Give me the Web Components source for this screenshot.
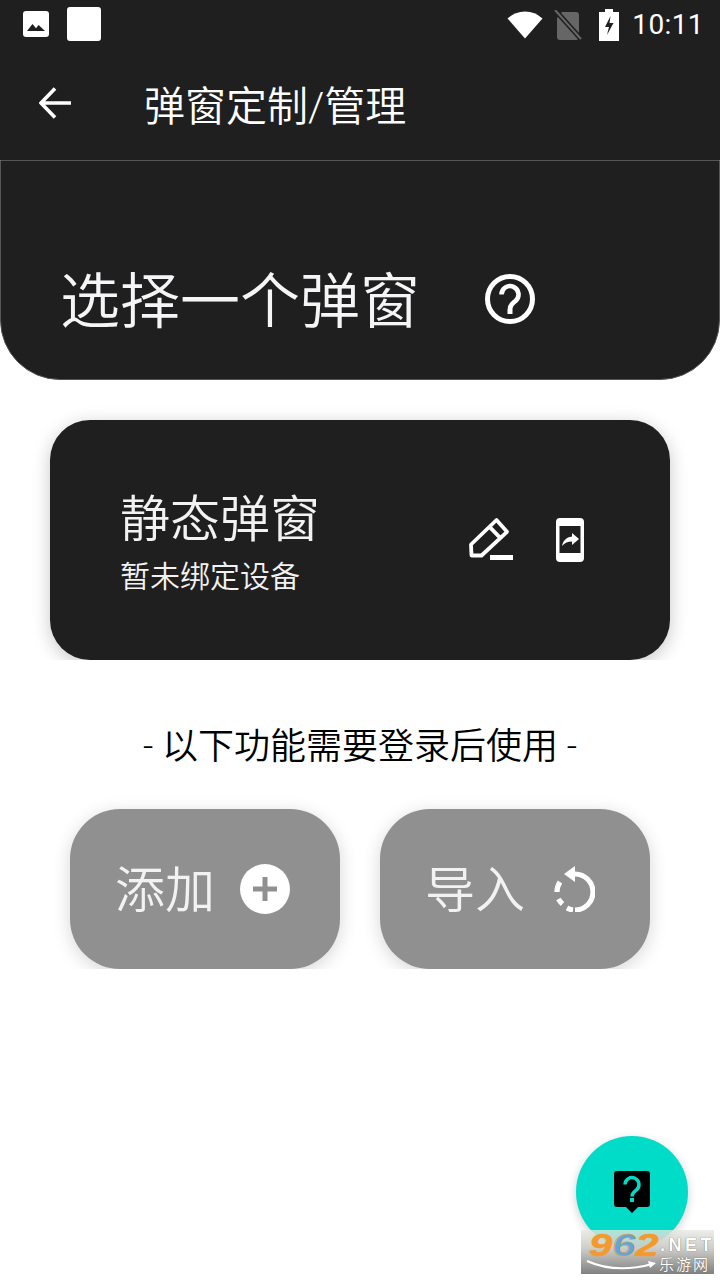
<!DOCTYPE html>
<html lang="zh">
<head>
<meta charset="utf-8">
<title>弹窗定制/管理</title>
<style>
  html, body { margin: 0; padding: 0; background: #fff; }
  body { width: 720px; height: 1280px; overflow: hidden; font-family: Roboto, "Noto Sans CJK SC", sans-serif; font-weight: 350; }
</style>
</head>
<body>
<app-screen>
  <status-bar slot="top" time="10:11"></status-bar>
  <tool-bar slot="top">弹窗定制/管理</tool-bar>
  <select-header slot="top">选择一个弹窗</select-header>
  <popup-card name="静态弹窗" sub="暂未绑定设备"></popup-card>
  <login-note>- 以下功能需要登录后使用 -</login-note>
  <action-row></action-row>
</app-screen>
<help-fab></help-fab>
<site-mark></site-mark>

<script>
class AppScreen extends HTMLElement {
  constructor() {
    super();
    this.attachShadow({ mode: 'open' });
    this.shadowRoot.innerHTML = `
      <style>
        :host { display: flex; flex-direction: column; width: 720px; height: 1280px; }
        main { display: flex; flex-direction: column; align-items: center; padding-top: 40px; }
      </style>
      <slot name="top"></slot>
      <main><slot></slot></main>
    `;
  }
}

class StatusBar extends HTMLElement {
  constructor() {
    super();
    this.attachShadow({ mode: 'open' });
    this.shadowRoot.innerHTML = `
      <style>
        :host { display: flex; align-items: center; height: 50px; background: #1f1f1f; color: #fff; }
        svg { display: block; flex: none; }
        .left { display: flex; align-items: center; gap: 18px; padding: 0 0 2px 23px; }
        .blank { width: 34px; height: 34px; background: #fff; border-radius: 3px; }
        .right { display: flex; align-items: center; margin-left: auto; padding-right: 16px; }
        .time { font-size: 28px; font-weight: 400; line-height: 50px; margin-left: 13px; letter-spacing: 0.4px; }
      </style>
      <div class="left">
        <svg width="26" height="26" viewBox="0 0 26 26"><rect width="26" height="26" rx="3" fill="#fff"/><path d="M4 20l5.500-7 3.500 4.200 2.600-3.200L22 20z" fill="#1f1f1f"/></svg>
        <div class="blank"></div>
      </div>
      <div class="right">
        <svg width="36" height="28" viewBox="0 0 36 28"><path d="M18 27.500L.5 7.500Q8 .5 18 .5t17.500 7z" fill="#fff"/></svg>
        <svg style="margin-left:11px" width="28" height="30" viewBox="0 0 28 30"><path d="M8 2h14a3 3 0 0 1 3 3v22a3 3 0 0 1-3 3H6a3 3 0 0 1-3-3V8z" fill="#666"/><path d="M1 0l26 29" stroke="#1f1f1f" stroke-width="5"/><path d="M1 0l26 29" stroke="#666" stroke-width="2"/></svg>
        <svg style="margin-left:17px" width="20" height="32" viewBox="0 0 20 32"><path d="M6 0h8v3h6v29H0V3h6z" fill="#fff"/><path d="M11.500 7L6 18h4L8 26l6.500-12h-4z" fill="#1f1f1f"/></svg>
        <span class="time">${this.getAttribute('time')}</span>
      </div>
    `;
  }
}

class ToolBar extends HTMLElement {
  constructor() {
    super();
    this.attachShadow({ mode: 'open' });
    this.shadowRoot.innerHTML = `
      <style>
        :host { display: flex; align-items: center; box-sizing: border-box; height: 110px; padding: 0 0 1px 39px; background: #1f1f1f; color: #fff; font-size: 41px; }
        svg { display: block; margin: 0 73px 4px 0; flex: none; }
        span { line-height: 110px; margin-top: 4px; }
      </style>
      <svg width="32" height="32" viewBox="0 0 32 32" fill="none" stroke="#fff" stroke-width="3.600"><path d="M32 16H3M16 1.500L2 16l14 14.500"/></svg>
      <span><slot></slot></span>
    `;
  }
}

class SelectHeader extends HTMLElement {
  constructor() {
    super();
    this.attachShadow({ mode: 'open' });
    this.shadowRoot.innerHTML = `
      <style>
        :host { display: flex; align-items: center; box-sizing: border-box; height: 220px; padding: 58px 0 0 59px; background: #1f1f1f; color: #f5f5f8; font-size: 60px;
          border: 1px solid #555; border-radius: 0 0 60px 60px; }
        span { margin-bottom: 6px; }
        svg { display: block; margin-left: 65px; }
      </style>
      <span><slot></slot></span>
      <svg width="50" height="50" viewBox="0 0 50 50" fill="none"><circle cx="25" cy="25" r="22.500" stroke="#fff" stroke-width="5"/><path d="M16.500 20.500a8.500 8.500 0 1 1 14 6.500c-3 2.500-5.500 3.500-5.500 8" stroke="#fff" stroke-width="4.600"/><rect x="22.500" y="35" width="5" height="5" fill="#fff"/></svg>
    `;
  }
}

class PopupCard extends HTMLElement {
  constructor() {
    super();
    this.attachShadow({ mode: 'open' });
    this.shadowRoot.innerHTML = `
      <style>
        :host { display: flex; align-items: center; box-sizing: border-box; width: 620px; height: 240px; padding-left: 70px; background: #1f1f1f; color: #f2f2f2; border-radius: 40px;
          box-shadow: 0 4px 18px rgba(0,0,0,.22); clip-path: inset(-30px -30px 0 -30px); }
        .text { display: flex; flex-direction: column; flex: 1; padding-top: 8px; }
        .name { font-size: 50px; line-height: 60px; }
        .sub { font-size: 30px; line-height: 42px; margin-top: 6px; }
        .icons { display: flex; align-items: center; gap: 42px; padding-right: 86px; }
        svg { display: block; }
        .pen { margin-bottom: 2px; }
      </style>
      <div class="text">
        <span class="name">${this.getAttribute('name')}</span>
        <span class="sub">${this.getAttribute('sub')}</span>
      </div>
      <div class="icons">
        <svg class="pen" width="46" height="44" viewBox="0 0 46 44" fill="none"><path d="M28.500 3L39 14.800 13.500 38.500H3.500L3 27.500zM22 10.300l11.700 12" stroke="#fff" stroke-width="3.800" stroke-linejoin="round"/><rect x="22" y="38" width="23" height="5" fill="#fff"/></svg>
        <svg width="28" height="44" viewBox="0 0 28 44"><path fill-rule="evenodd" d="M4 0h20a4 4 0 0 1 4 4v36a4 4 0 0 1-4 4H4a4 4 0 0 1-4-4V4a4 4 0 0 1 4-4zM3.500 8v27h21V8z" fill="#fff"/><path d="M16 15l7 6-7 6v-3.600c-4.300 0-7.300 1.200-10 4.600 1-5 4-9 10-9.600z" fill="#fff"/></svg>
      </div>
    `;
  }
}

class LoginNote extends HTMLElement {
  constructor() {
    super();
    this.attachShadow({ mode: 'open' });
    this.shadowRoot.innerHTML = `
      <style>
        :host { display: block; margin-top: 60px; font-size: 36px; line-height: 54px; color: #000; text-align: center; }
      </style>
      <slot></slot>
    `;
  }
}

class ActionButton extends HTMLElement {
  constructor() {
    super();
    this.attachShadow({ mode: 'open' });
    this.shadowRoot.innerHTML = `
      <style>
        :host { display: flex; align-items: center; box-sizing: border-box; width: 270px; height: 160px; padding: 0 0 6px 45px; background: #909090; color: #f2f2f2; font-size: 50px; border-radius: 50px;
          box-shadow: 0 4px 18px rgba(0,0,0,.16); clip-path: inset(-30px -30px 0 -30px); }
        ::slotted(svg) { display: block; margin: 6px 0 0 25px; }
      </style>
      <slot></slot>
    `;
  }
}

class ActionRow extends HTMLElement {
  constructor() {
    super();
    this.attachShadow({ mode: 'open' });
    this.shadowRoot.innerHTML = `
      <style>
        :host { display: flex; gap: 40px; margin-top: 35px; }
      </style>
      <action-button>添加
        <svg width="50" height="50" viewBox="0 0 50 50"><circle cx="25" cy="25" r="25" fill="#fff"/><path d="M25 13v24M13 25h24" stroke="#909090" stroke-width="5"/></svg>
      </action-button>
      <action-button>导入
        <svg style="margin-left:28px" width="42" height="46" viewBox="0 0 42 46" fill="none">
          <path d="M22 8a18 18 0 0 1 0 36" stroke="#fff" stroke-width="5.200"/>
          <path d="M22 0v16L11 8z" fill="#fff"/>
          <path d="M4 26a18 18 0 0 1 3-10M5.500 33a18 18 0 0 0 4 5M14 42a18 18 0 0 0 6 2" stroke="#fff" stroke-width="5.200"/>
        </svg>
      </action-button>
    `;
  }
}

class HelpFab extends HTMLElement {
  constructor() {
    super();
    this.attachShadow({ mode: 'open' });
    this.shadowRoot.innerHTML = `
      <style>
        :host { position: absolute; left: 576px; top: 1136px; display: flex; align-items: center; justify-content: center; width: 112px; height: 112px; border-radius: 50%; background: #00dcc8; box-shadow: 0 3px 10px rgba(0,0,0,.2); }
        svg { display: block; }
      </style>
      <svg width="36" height="42" viewBox="0 0 36 42"><path d="M3 0h30a3 3 0 0 1 3 3v30a3 3 0 0 1-3 3h-9l-6 6-6-6H3a3 3 0 0 1-3-3V3a3 3 0 0 1 3-3z" fill="#000"/><path d="M11 13.500a7 7 0 1 1 11.500 5.400c-2.500 2-4.500 3-4.500 6.600" fill="none" stroke="#00dcc8" stroke-width="3.400"/><rect x="16" y="27" width="4" height="4" fill="#00dcc8"/></svg>
    `;
  }
}

class SiteMark extends HTMLElement {
  constructor() {
    super();
    this.attachShadow({ mode: 'open' });
    this.shadowRoot.innerHTML = `
      <style>
        :host { position: absolute; left: 581px; top: 1230px; width: 133px; height: 44px;
          background: linear-gradient(rgba(232,232,226,.75) 0%, rgba(205,205,200,.95) 40%, #808080 100%); }
        .num { position: absolute; left: 8px; top: 3px; font: italic 700 31px/26px "Liberation Sans", sans-serif; color: #f39a2d; transform: scaleX(1.35); transform-origin: left top; -webkit-text-stroke: .5px #f39a2d; }
        .num b { color: #5da8d8; font-weight: 700; }
        .net { position: absolute; left: 79px; top: 7px; font: 700 18px/16px "Liberation Sans", sans-serif; color: #fff; letter-spacing: 3.500px; text-shadow: 0 0 1px #444; }
        .cn { position: absolute; left: 78px; top: 26px; font: 400 15px/18px "Liberation Sans", "Noto Sans CJK SC", sans-serif; color: #fff; letter-spacing: 2px; text-shadow: 0 0 1px #444; }
        svg { position: absolute; left: 5px; top: 30px; }
      </style>
      <span class="num">9<b>6</b>2</span>
      <span class="net">.NET</span>
      <span class="cn">乐游网</span>
      <svg width="72" height="12" viewBox="0 0 72 12" fill="none"><path d="M1 1Q30 14 66 4" stroke="#fff" stroke-width="2"/><path d="M62 1l8 2-6 5z" fill="#fff"/></svg>
    `;
  }
}

customElements.define('app-screen', AppScreen);
customElements.define('status-bar', StatusBar);
customElements.define('tool-bar', ToolBar);
customElements.define('select-header', SelectHeader);
customElements.define('popup-card', PopupCard);
customElements.define('login-note', LoginNote);
customElements.define('action-button', ActionButton);
customElements.define('action-row', ActionRow);
customElements.define('help-fab', HelpFab);
customElements.define('site-mark', SiteMark);
</script>
</body>
</html>
